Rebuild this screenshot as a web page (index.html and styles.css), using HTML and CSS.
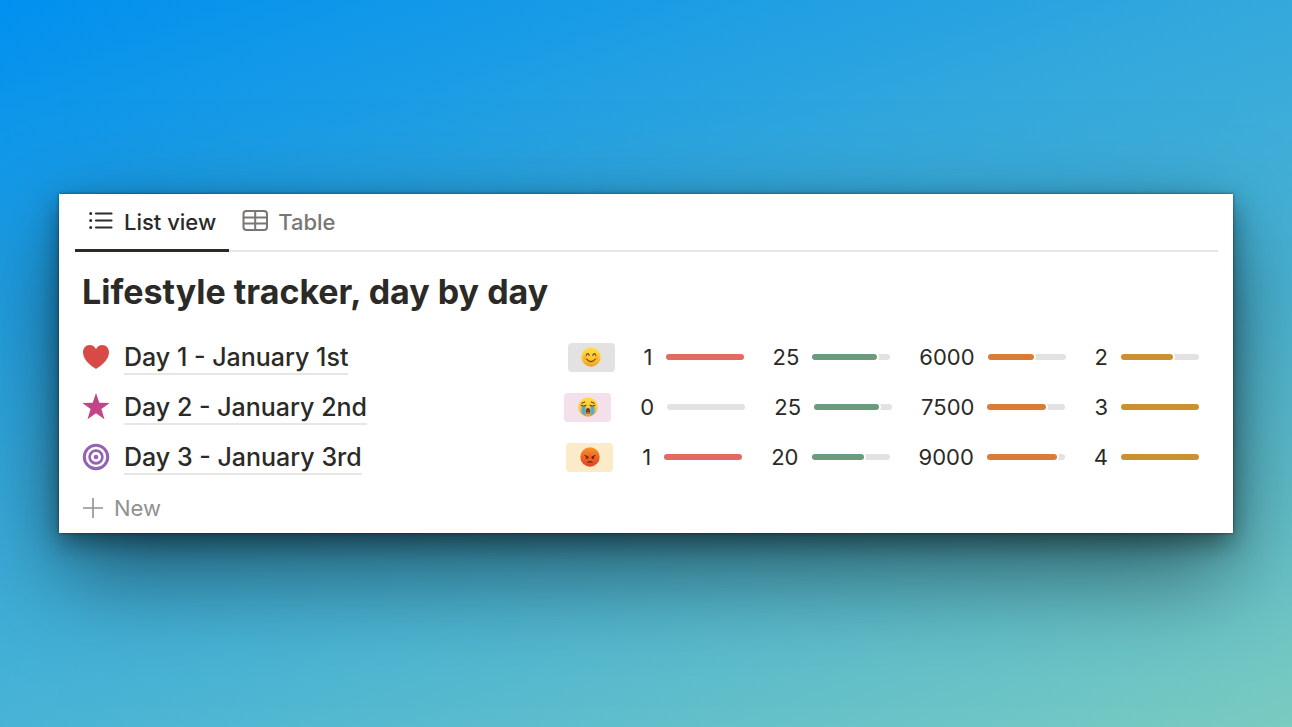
FILE: index.html
```html
<!DOCTYPE html>
<html lang="en">
<head>
    <meta charset="UTF-8">
    <meta name="viewport" content="width=device-width, initial-scale=1">
    <title>Lifestyle tracker, day by day</title>
    <link rel="stylesheet" href="styles.css">
</head>
<body>

    <main class="card">
        <nav class="tabs">
            <button type="button" class="tab active">
                <svg class="tab-icon" viewBox="0 0 26 26" fill="none" stroke="currentColor" stroke-width="2.2" stroke-linecap="round">
                    <path d="M8 4.5h15.5M8 11.5h15.5M8 18.5h15.5"/>
                    <path stroke-width="3" d="M2.7 4.5h.01M2.7 11.5h.01M2.7 18.5h.01"/>
                </svg>
                List view
            </button>
            <button type="button" class="tab">
                <svg class="tab-icon" viewBox="0 0 26 26" fill="none" stroke="currentColor" stroke-width="2">
                    <rect x="1.5" y="2.1" width="23.5" height="18.8" rx="3"/>
                    <path d="M1.5 8.4h23.5M1.5 14.6h23.5M13.2 2v19"/>
                </svg>
                Table
            </button>
        </nav>

        <h1>Lifestyle tracker, day by day</h1>

        <div class="row">
            <svg class="row-icon" viewBox="0 0 28 28" fill="#d64b45">
                <path d="M14 26C10 23.4 1 17.4 1 9.3C1 5.2 3.9 2 7.6 2C10.4 2 12.8 3.6 14 6.2C15.2 3.6 17.6 2 20.4 2C24.1 2 27 5.2 27 9.3C27 17.4 18 23.4 14 26Z"/>
            </svg>
            <a class="day" href="#">Day 1 - January 1st</a>
            <div class="props">
                <span class="mood gray">
                    <svg class="emoji" viewBox="0 0 20 20">
                        <circle cx="10" cy="10" r="9.7" fill="url(#yellow)"/>
                        <g fill="none" stroke="#70401a" stroke-width="1.2" stroke-linecap="round">
                            <path d="M5.2 8.3Q6.7 5 8.2 8.3M11.8 8.3Q13.3 5 14.8 8.3M5.7 12.2Q10 17 14.3 12.2"/>
                        </g>
                        <g fill="#f68b32" opacity=".4"><circle cx="4.2" cy="11" r="2"/><circle cx="15.8" cy="11" r="2"/></g>
                    </svg>
                </span>
                <div class="prop">1 <div class="bar red"><div class="fill" style="width: 100%"></div></div></div>
                <div class="prop">25 <div class="bar green"><div class="fill" style="width: 83%"></div></div></div>
                <div class="prop">6000 <div class="bar orange"><div class="fill" style="width: 60%"></div></div></div>
                <div class="prop">2 <div class="bar yellow"><div class="fill" style="width: 67%"></div></div></div>
            </div>
        </div>

        <div class="row">
            <svg class="row-icon" viewBox="0 0 28 28" fill="#c44489">
                <path d="M14 0L17.3 9.7L27.7 9.9L19.4 16.1L22.5 26.3L14 20.3L5.5 26.3L8.6 16.1L.3 9.9L10.7 9.7Z"/>
            </svg>
            <a class="day" href="#">Day 2 - January 2nd</a>
            <div class="props">
                <span class="mood pink">
                    <svg class="emoji" viewBox="0 0 20 20">
                        <circle cx="10" cy="10" r="9.7" fill="url(#yellow)"/>
                        <path d="M3.5 9.2h4v9.2q-2.5-1-4-3zM12.5 9.2h4v6.2q-1.5 2-4 3z" fill="#4daddd"/>
                        <g fill="none" stroke="#70401a" stroke-width="1.1" stroke-linecap="round">
                            <path d="M3.2 8.3Q5.5 9.8 8 8.2M12 8.2Q14.5 9.8 16.8 8.3M3.8 6.2L6.8 5M16.2 6.2L13.2 5"/>
                        </g>
                        <ellipse cx="10" cy="14" rx="2.2" ry="3" fill="#70401a"/>
                        <path d="M8.7 15.4Q10 14 11.3 15.4L10.7 16.6H9.3Z" fill="#e96c55"/>
                    </svg>
                </span>
                <div class="prop">0 <div class="bar red"></div></div>
                <div class="prop">25 <div class="bar green"><div class="fill" style="width: 83%"></div></div></div>
                <div class="prop">7500 <div class="bar orange"><div class="fill" style="width: 75%"></div></div></div>
                <div class="prop">3 <div class="bar yellow"><div class="fill" style="width: 100%"></div></div></div>
            </div>
        </div>

        <div class="row">
            <svg class="row-icon" viewBox="0 0 28 28" fill="none" stroke="#9362b3">
                <circle cx="14" cy="14" r="11.7" stroke-width="3"/>
                <circle cx="14" cy="14" r="6.4" stroke-width="2.6"/>
                <circle cx="14" cy="14" r="2.3" fill="#9362b3" stroke="none"/>
            </svg>
            <a class="day" href="#">Day 3 - January 3rd</a>
            <div class="props">
                <span class="mood cream">
                    <svg class="emoji" viewBox="0 0 20 20">
                        <circle cx="10" cy="10" r="9.7" fill="url(#angry)"/>
                        <g fill="none" stroke="#652315" stroke-width="1.1" stroke-linecap="round">
                            <path d="M5 8.6L8.2 10.2M15 8.6L11.8 10.2M8 15.4Q10 13.8 12 15.4"/>
                        </g>
                        <g fill="#652315"><circle cx="7" cy="11" r="1.1"/><circle cx="13" cy="11" r="1.1"/></g>
                    </svg>
                </span>
                <div class="prop">1 <div class="bar red"><div class="fill" style="width: 100%"></div></div></div>
                <div class="prop">20 <div class="bar green"><div class="fill" style="width: 67%"></div></div></div>
                <div class="prop">9000 <div class="bar orange"><div class="fill" style="width: 90%"></div></div></div>
                <div class="prop">4 <div class="bar yellow"><div class="fill" style="width: 100%"></div></div></div>
            </div>
        </div>

        <button type="button" class="new">
            <svg class="plus" viewBox="0 0 20 20" fill="none" stroke="currentColor" stroke-width="1.6">
                <path d="M10 0v20M0 10h20"/>
            </svg>
            New
        </button>
    </main>

    <!-- Emoji gradients -->
    <svg class="defs" aria-hidden="true">
        <linearGradient id="yellow" x1="0" y1="0" x2="0" y2="1">
            <stop offset="0" stop-color="#fee04a"/>
            <stop offset=".6" stop-color="#fdc62f"/>
            <stop offset="1" stop-color="#f19b26"/>
        </linearGradient>
        <linearGradient id="angry" x1="0" y1="0" x2="0" y2="1">
            <stop offset="0" stop-color="#f8962c"/>
            <stop offset=".5" stop-color="#f06425"/>
            <stop offset="1" stop-color="#e14422"/>
        </linearGradient>
    </svg>

</body>
</html>
```

FILE: styles.css
```css
* {
    box-sizing: border-box;
}
body {
    margin: 0;
    min-height: 100vh;
    padding: 40px 59px;
    display: flex;
    align-items: center;
    font-family: Inter, "Liberation Sans", sans-serif;
    color: #2b2a27;
    background: linear-gradient(160deg, #0090ef 0%, #33a8dc 39%, #4ab4d4 63%, #7acbc0 100%);
}
button {
    padding: 0;
    border: 0;
    background: none;
    font: inherit;
    cursor: pointer;
}
.card {
    flex: 1;
    padding: 0 15px 0 16px;
    background: #fff;
    box-shadow: 0 0 3px rgba(0, 0, 0, 0.5), 0 10px 24px rgba(0, 0, 0, 0.4), 0 40px 90px rgba(0, 0, 0, 0.5);
}

/* Tabs */
.tabs {
    display: flex;
    height: 58px;
    box-shadow: inset 0 -2px #e6e6e5;
}
.tab {
    display: flex;
    align-items: center;
    gap: 10px;
    padding: 0 13px;
    font-size: 22px;
    font-weight: 500;
    color: #787774;
    border-bottom: 3px solid transparent;
}
.tab.active {
    color: #2b2a27;
    border-bottom-color: #2b2a27;
}
.tab-icon {
    width: 26px;
    height: 26px;
}

h1 {
    margin: 18px 7px;
    font-size: 34px;
    line-height: 44px;
    font-weight: 700;
}

/* List rows */
.row {
    display: flex;
    align-items: center;
    height: 50px;
    padding: 0 19px 0 7px;
}
.row-icon {
    width: 28px;
    height: 28px;
    margin-right: 14px;
}
.day {
    padding-top: 2px;
    color: inherit;
    font-size: 25px;
    line-height: 32px;
    font-weight: 500;
    text-decoration: none;
    border-bottom: 2px solid #e6e6e5;
}
.props {
    display: flex;
    align-items: center;
    gap: 29px;
    margin-left: auto;
}
.prop {
    display: flex;
    align-items: center;
    gap: 13px;
    font-size: 22px;
}
.mood {
    display: flex;
    align-items: center;
    justify-content: center;
    width: 47px;
    height: 29px;
    border-radius: 4px;
}
.gray {
    background: #e3e2e0;
}
.pink {
    background: #f3e0ea;
}
.cream {
    background: #fbebc8;
}
.emoji {
    width: 20px;
    height: 20px;
}

.bar {
    width: 78px;
    height: 6px;
    border-radius: 3px;
    background: #e3e2e0;
}
.fill {
    height: 6px;
    border-radius: 3px;
    box-shadow: 0 0 0 2px #fff;
}
.red .fill {
    background: #e16b62;
}
.green .fill {
    background: #6a9b7c;
}
.orange .fill {
    background: #d87c36;
}
.yellow .fill {
    background: #c9912f;
}

.new {
    display: flex;
    align-items: center;
    gap: 11px;
    height: 51px;
    padding: 0 8px;
    font-size: 22px;
    color: #91918e;
}
.plus {
    width: 20px;
    height: 20px;
}
.defs {
    position: absolute;
    width: 0;
    height: 0;
}
```
